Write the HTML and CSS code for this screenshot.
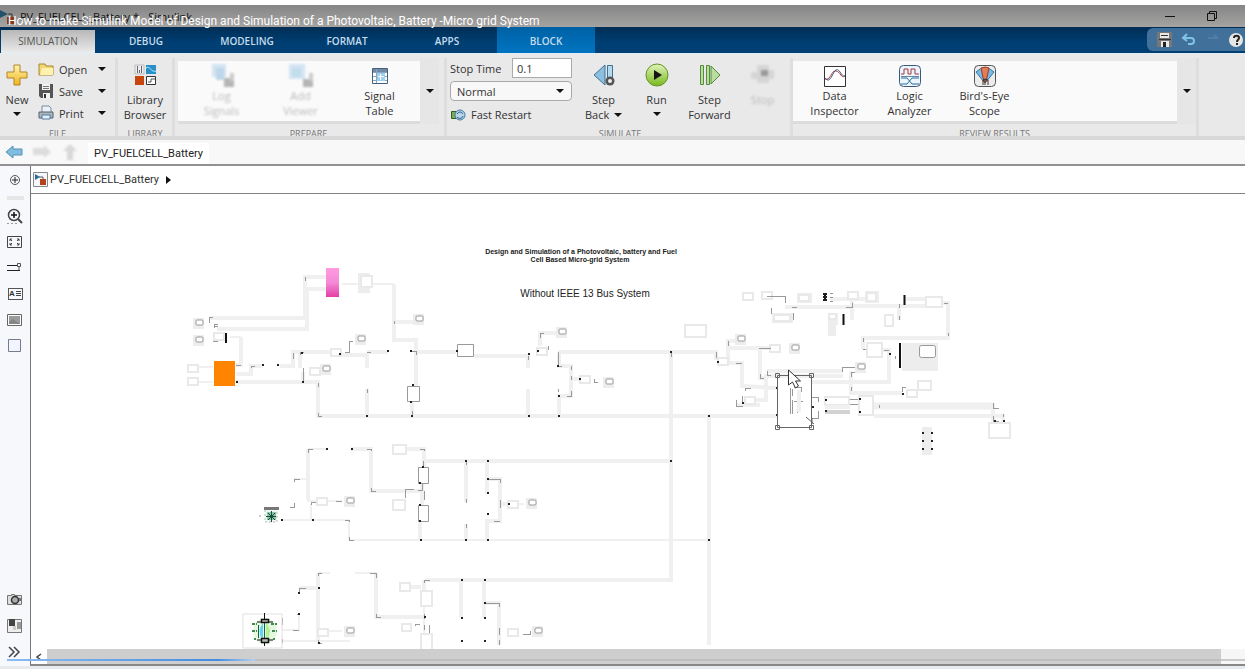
FILE: index.html
```html
<!DOCTYPE html>
<html lang="en">
<head>
<meta charset="utf-8">
<title>PV_FUELCELL_Battery * - Simulink</title>
<link rel="stylesheet" href="styles.css">
</head>
<body>
<header class="titlebar">
  <svg class="app-icon" width="16" height="16" viewBox="0 0 16 16"><path d="M0 1l8 4-8 4z" fill="#24506e"/><path d="M8 5h4v4" fill="none" stroke="#333"/><rect x="7" y="8" width="7" height="7" fill="#8a3a1c"/></svg>
  <span class="window-title">PV_FUELCELL_Battery * - Simulink</span>
  <span class="window-buttons">
    <button aria-label="Minimize"><svg width="12" height="12"><path d="M1 6.500h10" stroke="#111"/></svg></button>
    <button aria-label="Restore"><svg width="12" height="12" fill="none" stroke="#111"><path d="M1.500 3.500h7v7h-7zM3.500 3V1.500h7v7H9"/></svg></button>
  </span>
  <h1 class="video-title">How to make Simulink Model of Design and Simulation of a Photovoltaic, Battery -Micro grid System</h1>
</header>

<nav class="tabs">
  <button class="tab active">SIMULATION</button>
  <button class="tab debug">DEBUG</button>
  <button class="tab">MODELING</button>
  <button class="tab">FORMAT</button>
  <button class="tab">APPS</button>
  <button class="tab block-tab">BLOCK</button>
  <div class="quick">
    <button aria-label="Save"><svg width="16" height="16"><path d="M0 0h15v15H0z" fill="#777"/><path d="M3 1h9v5H3zM4 9h8v6H4z" fill="#e8e8e8"/><path d="M4 3.500h7M2 7.500h12" stroke="#333"/><path d="M6 10h3v5H6z" fill="#222"/></svg></button>
    <button aria-label="Undo"><svg width="16" height="16" fill="none" stroke="#7fc4e6" stroke-width="2"><path d="M6 2L2 6l4 3M3 6h7c4 0 4 6 0 6H7"/></svg></button>
    <button aria-label="Redo"><svg width="16" height="16" fill="none" stroke="#4f7fa8" stroke-width="2"><path d="M3 6h10M9 3l4 3"/></svg></button>
    <button aria-label="Help"><svg width="16" height="16"><circle cx="7" cy="8" r="7" fill="#e6e6e6"/><path d="M5 6c0-3 5-3 5 0 0 2-2 1.500-2 4M8 11v2" fill="none" stroke="#222" stroke-width="2"/></svg></button>
  </div>
</nav>

<section class="ribbon">
  <div class="group file">
    <div class="group-body">
      <button class="tool new"><svg width="22" height="24"><defs><linearGradient id="gold" x2="0" y2="1"><stop offset="0" stop-color="#fff6b0"/><stop offset="1" stop-color="#f0b31c"/></linearGradient></defs><path d="M8 2h6v7h7v6h-7v7H8v-7H1V9h7z" fill="url(#gold)" stroke="#b38424"/></svg><span>New</span><i class="caret"></i></button>
      <div class="file-list">
        <button><svg width="16" height="16"><path d="M1 3h6l1 2h7v9H1z" fill="#f4d774" stroke="#a88632"/><path d="M4 7h11v7H2z" fill="#fff1ae"/></svg><span>Open</span><i class="caret"></i></button>
        <button><svg width="16" height="16"><path d="M1 1h14v14H3l-2-2z" fill="#555"/><path d="M4 1h8v6H4zM5 10h7v5H5z" fill="#f2f2f2"/><path d="M5 3.500h6M5 5.500h6" stroke="#777"/><path d="M6 11h2v4H6z" fill="#333"/></svg><span>Save</span><i class="caret"></i></button>
        <button><svg width="16" height="16"><path d="M4 1h7l2 2v5H4z" fill="#e9f2fa" stroke="#7a8a9a"/><path d="M1 7h14v6H1z" fill="#aab4bd" stroke="#59636d"/><path d="M4 10h8v4H4z" fill="#dff0ff" stroke="#5b7d9b"/></svg><span>Print</span><i class="caret"></i></button>
      </div>
    </div>
    <div class="group-label">FILE</div>
  </div>

  <div class="group library">
    <div class="group-body">
      <button class="tool"><svg width="24" height="24"><path d="M2 2h9v9H2z" fill="#eee" stroke="#bbb"/><path d="M4.500 3v7M6.500 7v3M8.500 3v7" stroke="#667"/><path d="M13 2h10v9H13z" fill="#2790c8"/><path d="M13 5c4-3 5 5 10 3" fill="none" stroke="#bfe5fa"/><path d="M2 13h9v9H2z" fill="#c84510"/><path d="M13.500 13.500h9v8h-9z" fill="#fff" stroke="#333"/><path d="M15 19h3v-3h4" fill="none" stroke="#555"/></svg><span>Library<br>Browser</span></button>
    </div>
    <div class="group-label">LIBRARY</div>
  </div>

  <div class="group prepare">
    <div class="group-body">
      <div class="gallery">
        <button class="tool wide faded" disabled><svg width="24" height="24"><path d="M2 0h14v13H2z" fill="#d3e4f2"/><path d="M6 4h8v12H6z" fill="#bdd6ea"/><path d="M14 14h10v9H14z" fill="#b5b5b5"/><path d="M20 9h4v8h-4z" fill="#ccc"/></svg><span>Log<br>Signals</span></button>
        <button class="tool wide faded" disabled><svg width="24" height="24"><path d="M0 0h16v15H0z" fill="#d3e4f2"/><path d="M3 4h9v9H3z" fill="#c3dcee"/><path d="M14 15h10v8H14z" fill="#b5b5b5"/><path d="M20 9h4v8h-4z" fill="#ccc"/></svg><span>Add<br>Viewer</span></button>
        <button class="tool wide"><svg width="24" height="24"><path d="M4.500 4.500h15v15h-15z" fill="#fff" stroke="#44607c"/><path d="M5 5h14v3H5z" fill="#718ba4"/><path d="M5 8.500h14M5 12.500h14M5 16.500h14M8.500 5v14" stroke="#8ba5bf"/><path d="M9 9h8v8H9z" fill="#9dd0f0"/><path d="M10 12.500h6M12.500 10v6" stroke="#fff"/></svg><span>Signal<br>Table</span></button>
      </div>
      <button class="more" aria-label="More prepare tools"><i class="caret"></i></button>
    </div>
    <div class="group-label">PREPARE</div>
  </div>

  <div class="group simulate">
    <div class="group-body">
      <div class="fields">
        <div class="field"><label for="stop">Stop Time</label><input id="stop" type="text" value="0.1"></div>
        <div class="mode"><select aria-label="Simulation mode"><option>Normal</option></select><i class="caret"></i></div>
        <button class="restart"><svg width="16" height="14"><path d="M1.500 3.500h5v7h-5z" fill="#78b14a" stroke="#355c24"/><circle cx="10" cy="7" r="5" fill="#b7d5e9" stroke="#4779a2"/><path d="M7 6c2-3 5-2 6 0M13 8c-1 3-4 3-6 1" stroke="#205a86" fill="none"/></svg><span>Fast Restart</span></button>
      </div>
      <button class="tool step"><svg width="24" height="24"><path d="M13 2v20L2 12z" fill="#8dc0e0" stroke="#3e7195"/><path d="M15.500 2.500h5v19h-5z" fill="#b7d9ee" stroke="#3e7195"/><circle cx="18" cy="18" r="4.500" fill="#555"/><circle cx="18" cy="18" r="2" fill="#eee"/></svg><span>Step<br>Back <i class="caret"></i></span></button>
      <button class="tool step"><svg width="24" height="24"><defs><linearGradient id="green" x2="0" y2="1"><stop offset="0" stop-color="#e1f3bd"/><stop offset="1" stop-color="#78b91b"/></linearGradient></defs><circle cx="12" cy="12" r="11" fill="url(#green)" stroke="#659426"/><path d="M9 7l8 5-8 5z" fill="#151515"/></svg><span>Run</span><i class="caret"></i></button>
      <button class="tool step"><svg width="24" height="24" fill="#b9dd9c" stroke="#568c3c"><path d="M2.500 2.500h3v19h-3zM8.500 2.500h3v19h-3zM13 3l9 9-9 9z"/></svg><span>Step<br>Forward</span></button>
      <button class="tool step faded" disabled><svg width="24" height="24"><path d="M6 2h12v5h5v9h-5v4H6v-4H0V9h6z" fill="#d5d5d5"/><path d="M10 7h7v6h-7z" fill="#999"/></svg><span>Stop</span></button>
    </div>
    <div class="group-label">SIMULATE</div>
  </div>

  <div class="group review">
    <div class="group-body">
      <div class="gallery">
        <button class="tool"><svg width="24" height="24"><path d="M1.500 2.500h21v20h-21z" fill="#fff" stroke="#333"/><path d="M2 15c6 2 6-9 11-8s5 8 9 5" fill="none" stroke="#b3393d"/><path d="M2 14c3 4 5 2 8-4s5-5 7-2 3 4 5 4" fill="none" stroke="#445b88"/></svg><span>Data<br>Inspector</span></button>
        <button class="tool"><svg width="24" height="24"><rect x="1.500" y="1.500" width="21" height="21" rx="4" fill="#eaf5fd" stroke="#3a587b"/><path d="M3 10h3V5h4v5h3V5h4v5h4" fill="none" stroke="#a63838"/><path d="M3 12.500h18" stroke="#6787a1"/><path d="M3 14h6l5 6h7M3 20h6l5-6h7" fill="none" stroke="#2d6b97"/></svg><span>Logic<br>Analyzer</span></button>
        <button class="tool"><svg width="24" height="24"><rect x="1.500" y="1.500" width="21" height="21" rx="4" fill="#ececec" stroke="#555"/><path d="M3 8q9-9 18 0l-8 10h-2z" fill="#78b9e6" stroke="#347aa5"/><path d="M8 4q4-2 8 0l-3 14h-2z" fill="#e37c57" stroke="#963c24"/><path d="M10 21v-5l2-1 3 1v5M12 15v6" fill="none" stroke="#333"/></svg><span>Bird's-Eye<br>Scope</span></button>
      </div>
      <button class="more" aria-label="More review tools"><i class="caret"></i></button>
    </div>
    <div class="group-label">REVIEW RESULTS</div>
  </div>
</section>

<nav class="docbar">
  <button aria-label="Back"><svg width="18" height="16"><path d="M1 8l7-6v3h9v6H8v3z" fill="#80bce0" stroke="#5790b6"/></svg></button>
  <button aria-label="Forward" disabled><svg class="soft" width="20" height="16"><path d="M1 4h11V1l7 7-7 6v-3H1z" fill="#dcdcdc"/></svg></button>
  <button aria-label="Up" disabled><svg class="soft" width="18" height="18"><path d="M9 1l7 7h-4v9H6V8H2z" fill="#d8d8d8"/></svg></button>
  <button class="doc-tab">PV_FUELCELL_Battery</button>
</nav>

<main class="workspace">
  <aside class="palette">
    <button aria-label="Hide browser"><svg width="16" height="16" fill="none" stroke="#555"><circle cx="8" cy="8" r="4.500"/><path d="M8 5v6M5 8h6" stroke="#222"/></svg></button>
    <hr>
    <button aria-label="Zoom"><svg width="16" height="16" fill="none" stroke="#444"><circle cx="7" cy="7" r="5.500" stroke-width="1.500"/><path d="M7 4v6M4 7h6" stroke="#111" stroke-width="1.500"/><path d="M11 11l4 4" stroke-width="2"/><path d="M0 15.500h12" stroke="#999" stroke-dasharray="2 2"/></svg></button>
    <button aria-label="Fit to view"><svg width="16" height="16" fill="none" stroke="#444"><path d="M.5 2.500h14v11H.5z"/><path d="M3 7V5h2M3 5l2 2M12 7V5h-2M12 5l-2 2M3 9v2h2M3 11l2-2M12 9v2h-2M12 11l-2-2"/></svg></button>
    <button aria-label="Signals"><svg width="16" height="16" fill="none" stroke="#222"><path d="M0 5.500h10M0 10.500h13"/><path d="M10.500 3.500h3v3h-3zM12 7v3" stroke="#555"/></svg></button>
    <button aria-label="Annotation" class="annotation"><b>A</b><svg width="5" height="8" stroke="#444"><path d="M0 1.500h5M0 3.500h5M0 5.500h5"/></svg></button>
    <button aria-label="Image"><svg width="16" height="16"><path d="M.5 2.500h14v11H.5z" fill="#fff" stroke="#666"/><path d="M2 4h11v8H2z" fill="#9b9b9b"/><path d="M2 10l4-3 7 5H2z" fill="#858585"/></svg></button>
    <button aria-label="Area"><svg width="16" height="16"><path d="M1.500 1.500h12v12h-12z" fill="#f2f4ff" stroke="#77798c"/></svg></button>
    <span class="grow"></span>
    <button aria-label="Screenshot"><svg width="16" height="16"><path d="M.5 3.500h4v-1h3v1h7v9H.5z" fill="#ddd" stroke="#777"/><circle cx="8" cy="8" r="3.500" fill="#aaa" stroke="#333" stroke-width="1.500"/><path d="M12 6h2v3h-2" fill="#777"/></svg></button>
    <button aria-label="Model data"><svg width="16" height="16"><path d="M.5 1.500h14v13H.5z" fill="#eee" stroke="#777"/><path d="M2 1h6v7H2z" fill="#444"/><path d="M10 4h4v7h-4z" fill="#999"/><path d="M6 8v4h3V8z" fill="#ccc"/></svg></button>
    <button aria-label="Expand"><svg width="16" height="16" fill="none" stroke="#444" stroke-width="1.500"><path d="M2 3l5 5-5 5M7 3l5 5-5 5"/></svg></button>
  </aside>

  <section class="editor">
    <nav class="crumbs"><svg width="15" height="15"><path d="M.5.5h14v14H.5z" fill="#f5f8fa" stroke="#888"/><path d="M2 2l5 3-5 3z" fill="#2c6c95"/><path d="M6 5h4v3" fill="none" stroke="#555"/><path d="M7 7h6v6H7z" fill="#b4431d"/></svg><a href="#">PV_FUELCELL_Battery</a><i class="crumb-arrow"></i></nav>
    <div class="canvas">
      <svg class="diagram" width="100%" height="100%" role="img" aria-label="Micro-grid model">
        <defs>
          <linearGradient id="pink" x2="0" y2="1"><stop offset="0" stop-color="#ff9be0"/><stop offset=".5" stop-color="#f48ad6"/><stop offset="1" stop-color="#e33fa6"/></linearGradient>
          <g id="scope"><path class="shade" d="M-6-5H5V6H-6z"/><rect class="screen" x="-3" y="-3" width="7" height="5" rx="1"/></g>
          <g id="part"><path class="block" d="M-5-3H5V4H-5z"/></g>
        </defs>
        <g transform="translate(-31 -194)">
          <path class="wire" d="M210 318H305V277H326M217 329H307V289H326M394 284V340H416V386M394 322H413M241 337V365H236M236 374H251V366H262M280 366H293V352H332M236 382H318V416H777M300 353V368M303 372V382M338 355H367V368M367 389V416M367 352H388M415 352H456M412 401V416M474 356H528V368M528 389V416M540 346V333H558M558 352H716V360M559 354V366H571V396H559V416M571 379H585M671 352V580H425M425 461H671M709 416V645M728 362V341H737M728 348H770M727 363H742V386L777 388M760 348V378H767M745 400H766V376H843M736 405H760M767 371H843M811 382H889V350H880M851 371V393H902M785 307H852M852 306H930M942 303H948V338H863V349M852 295V320M899 320V307M830 299H865M906 299H926M874 416H1003V422M993 403V421"/>
          <path class="wire wide-wire" d="M874 406H993"/>
          <path class="wire thin" d="M342 284H358M372 284H394M197 367H213M197 382H213M230 337H241M308 449H327M294 479H308M350 540H709M307 501H317M311 504V520H349V540M282 520H311M320 501H342M508 504H524M299 614V630H282M282 641H350M318 573H330M355 573H376M323 631H342M424 606V634"/>
          <path class="wire" d="M308 449V500M351 449H371V491H424M406 449H424V467M422 483V505M420 521V540M466 461V502M466 524V540M487 461V494M487 479H500V521H487V540M500 504H507M299 588H318V643M318 573V588M376 573V617H424M461 580V618M484 580V618M484 603H499V645M410 587H421M424 580V592"/>
          <path class="trace" d="M209 323V317H213M214 328V324H218M305 277V281M394 321V324M236 365H241M251 368V366H255M293 359V353M345 352H349V341H353M367 352H371M367 389V393M300 355V352H304M318 383V387M303 368V382M318 413V416H322M411 351H416V355M412 416V411M528 356V360M540 338V333H544M548 346V350M558 352V366H562M571 366V370M571 376V380M571 391V396H567M558 389V392M598 382H594V379M671 352V357M716 352V358M728 341V346M742 363H736M760 348H770M767 371V375H771M760 374V378H764M745 391V388H751M742 396V403M736 400V406H743M785 296V303M797 307H792M852 303V307H846M899 320V316M899 308V304M930 306V302H926M948 303H944M948 336V333M863 338V342M863 349H867M889 350H884M895 356V359M842 372V367H856V371M851 377V372H860M851 387V391M902 392V387H906M811 393V397H818V402M818 411V418H812M825 399V406M849 396V404H859M859 399H850M873 395V399M873 415V411M879 405V408M993 403V408H999M993 416V421H999M1003 414V417M915 345V351H909M916 356V364M926 297V302"/>
          <path class="trace" d="M308 453V449H313M371 451V449H367M371 488V491H376M405 498V489H414M424 451V449H420M423 461V468H418M422 480V490H418M424 491V500M294 482V479H300M294 503V507H290M311 505V502H317M349 522V520H345M349 537V540H354M466 461V465M466 499V503M466 524V528M487 479H500V483M500 500V508M500 521H494M336 501H342M299 592V588H306M318 576V573H322M370 573H376V578M376 614V617H381M424 583V580H430M421 590H432M421 606H432M424 614V619M299 614H297M299 630H293M318 640V643H322M282 618V625M282 639V643M415 626V624H420M424 625V630M429 625V633M484 603H499V607M499 628V635M523 634H530V631M499 640V645"/>
          <path class="screen" d="M418.500 467.500h10v16h-10zM418.500 505.500h10v16h-10zM407.500 386.500h12v15h-12zM457.500 344.500h16v12h-16z"/>
          <path class="shade" d="M358 273H370V293H358zM828 313H838V325H836V336H828zM902 343H938V371H902zM922 427H932V455H922zM797 293H812V303H797zM865 291H879V303H865zM772 313H793V323H772z"/>
          <path class="block" d="M361 276H372V287H361zM685 325H706V337H685zM799 295H809V301H799zM867 293H876V301H867zM926 297H942V307H926zM774 315H790V321H774zM829 314H836V319H829zM885 315H893V326H885zM867 343H882V357H867zM918 381H931V390H918zM859 396H873V415H859zM989 423H1010V438H989zM393 445H406V454H393zM393 500H405V510H393zM400 583H410V591H400zM402 624H411V631H402zM421 591H432V606H421zM421 634H432V650H421zM825 397H849V405H825z"/>
          <path class="wire" d="M825 407H850"/><path class="dark-wire" d="M825 412H850"/>
          <rect class="screen" x="919.500" y="345.500" width="16" height="12" rx="2"/>
          <path class="bar" d="M226 333V343M904.500 295V305M843.500 314V325M900 343V368M825 293V301"/>
          <path class="dots" d="M823 294h4M823 297h4M823 300h4"/>
          <use href="#scope" x="199" y="323"/><use href="#scope" x="199" y="340"/><use href="#scope" x="419" y="319"/><use href="#scope" x="361" y="339"/><use href="#scope" x="326" y="369"/><use href="#scope" x="562" y="332"/><use href="#scope" x="609" y="382"/><use href="#scope" x="741" y="339"/><use href="#scope" x="795" y="348"/><use href="#scope" x="861" y="367"/><use href="#scope" x="350" y="501"/><use href="#scope" x="532" y="503"/><use href="#scope" x="350" y="631"/><use href="#scope" x="538" y="631"/>
          <use href="#part" x="193" y="368"/><use href="#part" x="193" y="381"/><use href="#part" x="336" y="352"/><use href="#part" x="315" y="371"/><use href="#part" x="542" y="351"/><use href="#part" x="585" y="379"/><use href="#part" x="723" y="361"/><use href="#part" x="775" y="348"/><use href="#part" x="748" y="296"/><use href="#part" x="767" y="295"/><use href="#part" x="853" y="295"/><use href="#part" x="750" y="400"/><use href="#part" x="912" y="393"/><use href="#part" x="322" y="501"/><use href="#part" x="513" y="504"/><use href="#part" x="323" y="632"/><use href="#part" x="513" y="632"/><use href="#part" x="219" y="336"/>
          <path class="trace" d="M767 296H785M771 314V308M793 320V313M833 293H830M833 297H830M833 301H830M759 348H771M213 341H218M214 326H218"/>
          <path class="dots" d="M262 365h2M277 365h2M301 353h2M302 382h2M236 382h2M387 351h2M410 351h2M412 385h2M410 402h2M366 416h2M411 416h2M456 351h2M339 354h2M528 354h2M528 416h2M537 351h2M557 366h2M558 396h2M558 416h2M579 379h2M670 352h2M708 416h2M717 362h2M742 403h2M776 388h2M776 415h2M889 354h2M812 407h2M825 400h2M825 411h2M859 399h2M859 412h2M902 394h2M922 433h2M931 433h2M922 441h2M931 441h2M922 449h2M931 449h2M994 421h2M1003 421h2M326 449h2M351 449h2M281 520h2M312 520h2M465 461h2M487 461h2M487 479h2M487 493h2M487 514h2M465 540h2M487 540h2M420 540h2M508 504h2M708 540h2M670 461h2M318 588h2M298 593h2M298 614h2M318 643h2M461 580h2M484 580h2M461 618h2M484 618h2M484 603h2M461 641h2M484 641h2M424 617h2M422 467h2M419 483h2M419 505h2M419 521h2"/>
          <rect x="214" y="361" width="21" height="25" fill="#ff8500"/>
          <rect x="326" y="268" width="13" height="29" fill="url(#pink)"/>
          <g><path d="M264 507h15v3h-15z" fill="#777"/><path d="M265 510v12h12v-12" fill="#edf8ef" stroke="#bbb" stroke-dasharray="2 2"/><path d="M267 512h9v8h-9z" fill="#91c6aa"/><path d="M268 513l7 7M275 513l-7 7M271.500 511v11M266 516.500h10" stroke="#164c3d"/><path d="M259 516h2" stroke="#999"/></g>
          <g><path d="M243 614h39v34h-39z" fill="#fff" stroke="#e0e0e0"/><ellipse cx="265" cy="631" rx="12" ry="13" fill="#e2f8df"/><path d="M263 623q-7 8 0 17z" fill="#63d2ee"/><path d="M266 623q8 8 0 17z" fill="#b5ee94"/><path d="M258.500 625v13M264.500 623v17" stroke="#175e4d"/><path d="M264.500 613v8M264.500 640v6M257 622h5M268 622h5M257 640h5M268 640h5" stroke="#111"/><path d="M261.500 619.500h7v3h-7zM261.500 638.500h7v4h-7z" fill="#bbb" stroke="#111" stroke-width="1.500"/><path d="M252 624h5M271 624h6M252 631h5M272 631h5M254 639h2M273 639h2" stroke="#438b50" stroke-width="2" stroke-dasharray="3 1"/></g>
          <g class="selection"><path d="M777.500 375.500h34v52h-34z"/><path d="M775.500 373.500h4v4h-4zM809.500 373.500h4v4h-4zM775.500 425.500h4v4h-4zM809.500 425.500h4v4h-4z"/></g>
          <path d="M790.500 388V414M792.500 389V396M792.500 400V414M794 387h7v5M794 401h9M797 404v9" class="trace"/><path class="wire" d="M799 390V412"/><path d="M806 417l8 7M812 418v6" stroke="#666"/>
          <path d="M788.500 370v15l4-3 3 6 3-2-3-5h5z" fill="#fff" stroke="#333"/>
          <text class="heading" x="581" y="254">Design and Simulation of a Photovoltaic, battery and Fuel</text>
          <text class="heading" x="580" y="262">Cell Based Micro-grid System</text>
          <text class="subtitle" x="585" y="297">Without IEEE 13 Bus System</text>
        </g>
      </svg>
    </div>
    <div class="scrollbar"><button aria-label="Scroll left"><svg width="6" height="8"><path d="M5 1L1 4l4 3" fill="none" stroke="#444" stroke-width="1.500"/></svg></button><span class="thumb"></span></div>
  </section>
</main>
<div class="playback"><span class="played"></span></div>
</body>
</html>
```
FILE: styles.css
```css
* { box-sizing: border-box; }
body {
  margin: 0; padding-top: 5px; height: 100vh; display: flex; flex-direction: column;
  overflow: hidden; position: relative; background: #fff;
  font: 11px/15px "Open Sans", "Noto Sans", sans-serif; color: #333;
}
button { border: 0; padding: 0; margin: 0; background: none; font: inherit; color: inherit; display: flex; align-items: center; justify-content: center; }
svg { display: block; flex: none; }
.caret { display: inline-block; flex: none; width: 0; height: 0; border: 4px solid transparent; border-top-color: #111; border-bottom-width: 0; }

.titlebar { position: relative; flex: 0 0 22px; display: flex; align-items: center; background: linear-gradient(#858585, #a5a4a3); }
.app-icon { margin-top: 2px; }
.window-title { padding-left: 4px; color: #111; white-space: nowrap; }
.window-buttons { margin-left: auto; display: flex; gap: 30px; padding-right: 27px; }
.video-title { position: absolute; left: 8px; top: 8px; margin: 0; font: 12px/16px Roboto, sans-serif; color: #fff; white-space: nowrap; z-index: 2; }

.tabs { flex: 0 0 26px; display: flex; align-items: stretch; padding-left: 1px; background: linear-gradient(#002e55, #003f73 60%); }
.tab { width: 100px; padding-top: 2px; color: #c5dcec; font-size: 10px; font-weight: 600; }
.tab.active { width: 94px; margin-top: 3px; padding-top: 0; color: #555; font-weight: 400; background: linear-gradient(#b8b8b8, #ebebeb); }
.tab.debug { width: 102px; }
.tab.block-tab { width: 98px; background: linear-gradient(#0061a5, #0074c1); }
.quick { margin: 1px 0 2px auto; padding-left: 10px; display: flex; gap: 8px; align-items: center; background: #41719b; border-radius: 6px 0 0 6px; }

.ribbon { flex: 0 0 87px; display: flex; background: #e9e9e9; border-top: 1px solid #e2eef6; border-bottom: 4px solid #d8d8d8; padding-top: 4px; overflow: hidden; }
.group { display: flex; flex-direction: column; border-right: 3px solid #dedede; flex: none; }
.group-body { display: flex; flex: none; height: 69px; }
.group-label { text-align: center; font-size: 9px; line-height: 13px; color: #777; }
.file { width: 118px; }
.library { width: 57px; }
.prepare { width: 272px; padding: 0 5px 0 3px; }
.simulate { width: 346px; padding-left: 3px; }
.review { flex: 0 1 406px; }
.tool { flex: none; width: 75px; flex-direction: column; justify-content: flex-start; padding-top: 5px; text-align: center; white-space: nowrap; }
.tool span { padding-top: 5px; }
.tool > .caret { margin-top: 5px; }
.tool span .caret { vertical-align: 2px; margin-left: 2px; }
.tool.new { width: 34px; }
.library .tool { width: 54px; }
.tool.step { width: 53px; }
.tool.wide { width: 79px; }
.file-list { flex: 1; display: flex; flex-direction: column; padding-left: 4px; }
.file-list button { height: 22px; justify-content: flex-start; gap: 5px; }
.file-list span { width: 34px; text-align: left; }
.gallery { flex: 1; display: flex; margin-top: 3px; height: 60px; background: #fafafa; padding-left: 4px; box-shadow: 0 3px #dcdcdc; }
.gallery .tool { padding-top: 3px; }
.gallery .tool span { padding-top: 0; }
.more { width: 19px; height: 66px; background: #e6e6e6; }
.faded { color: #bbb; filter: blur(1px); }
.soft { filter: blur(1px); }
.fields { width: 127px; display: flex; flex-direction: column; }
.field { display: flex; align-items: center; gap: 8px; height: 20px; }
.field label { width: 54px; white-space: nowrap; }
.field input { width: 60px; height: 20px; border: 1px solid #aaa; background: #fff; padding: 0 4px; font: inherit; color: #333; }
.mode { position: relative; margin-top: 3px; width: 122px; }
.mode select { width: 100%; height: 20px; appearance: none; border: 1px solid #aaa; border-radius: 4px; background: #f8f8f8; padding: 0 6px; font: inherit; color: #333; }
.mode .caret { position: absolute; right: 8px; top: 8px; }
.restart { margin-top: 6px; gap: 5px; justify-content: flex-start; }

.docbar { flex: 0 0 26px; display: flex; align-items: center; background: #f8f8f8; border-bottom: 2px solid #919191; padding-left: 5px; gap: 9px; }
.doc-tab { align-self: stretch; margin-top: 3px; background: #fff; width: 121px; color: #222; font: 11px/15px Roboto, sans-serif; }

.workspace { flex: 1; min-height: 0; display: flex; padding-bottom: 3px; background: #e8ebee; }
.palette { flex: 0 0 30px; display: flex; flex-direction: column; align-items: center; gap: 10px; padding: 6px 0; background: #f7f8fb; }
.palette button { width: 16px; height: 16px; flex: none; }
.palette hr { width: 17px; height: 4px; border: 0; margin: -2px 0; background: #e6e6e6; }
.palette .annotation { width: 15px; height: 12px; margin: 2px 0; border: 1px solid #555; gap: 1px; font: 8px/10px "Liberation Sans", sans-serif; }
.grow { flex: 1; }
.editor { flex: 1; min-width: 0; display: flex; flex-direction: column; background: #fff; border-left: 1px solid #777; border-bottom: 2px solid #888; }
.crumbs { flex: 0 0 28px; display: flex; align-items: center; gap: 2px; padding-left: 2px; border-bottom: 1px solid #828282; }
.crumbs a { color: #333; text-decoration: none; font: 11px/15px Roboto, sans-serif; }
.crumb-arrow { margin-left: 5px; border: 4px solid transparent; border-left: 5px solid #111; border-right: 0; }
.canvas { flex: 1; min-height: 0; }
.scrollbar { flex: 0 0 15px; display: flex; padding-right: 24px; background: #f6f6f6; }
.scrollbar button { width: 16px; background: #fff; }
.thumb { flex: 1; background: #cecece; }
.playback { position: absolute; left: 7px; right: 0; bottom: 8px; height: 2px; background: #b5b5b5aa; }
.played { display: block; width: 20%; height: 2px; background: linear-gradient(90deg, #8bbcf1, #448be0 85%, #b5d1ef); }

.wire { fill: none; stroke: #f0f0f0; stroke-width: 4; }
.wide-wire { stroke-width: 7; }
.thin { stroke-width: 2; }
.dark-wire { fill: none; stroke: #d2d2d2; stroke-width: 4; }
.trace { fill: none; stroke: #999; stroke-width: 1; shape-rendering: crispEdges; }
.shade { fill: #ededed; }
.block { fill: #fff; stroke: #e9e9e9; stroke-width: 2; }
.screen { fill: #fff; stroke: #999; }
.bar { stroke: #111; stroke-width: 2; }
.dots { stroke: #222; stroke-width: 2; }
.selection { fill: none; stroke: #666; }
.heading { font: bold 7px "Liberation Sans", sans-serif; text-anchor: middle; fill: #222; }
.subtitle { font: 10px "Liberation Sans", sans-serif; text-anchor: middle; fill: #222; }
```
